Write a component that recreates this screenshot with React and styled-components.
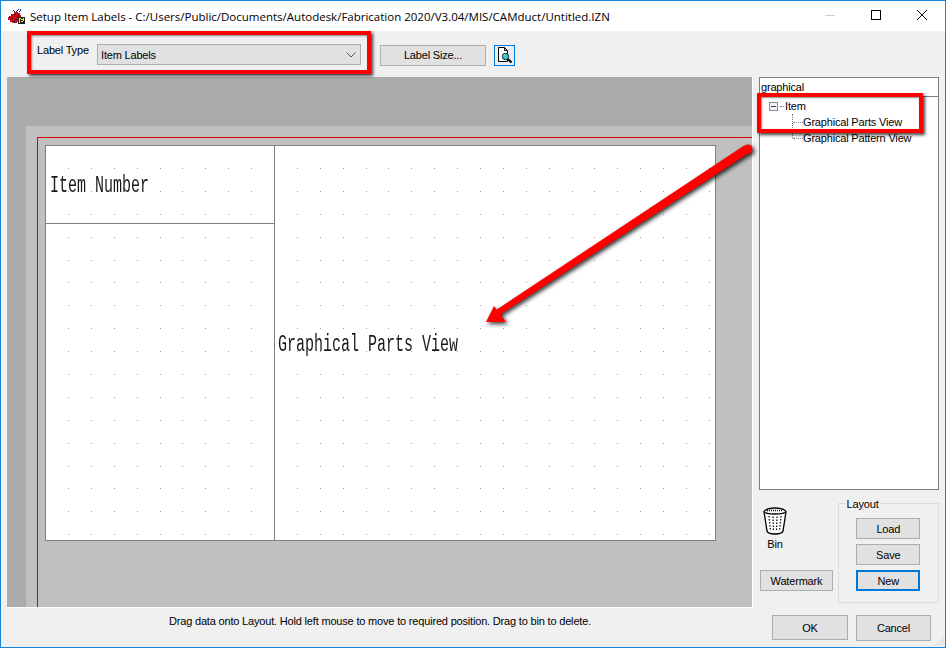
import React from 'react'
import styled, { createGlobalStyle } from 'styled-components'

const GlobalStyle = createGlobalStyle`
  html, body {
    margin: 0;
    padding: 0;
    background: #f0f0f0;
  }
`

const Window = styled.div`
  position: relative;
  box-sizing: border-box;
  width: 946px;
  height: 648px;
  overflow: hidden;
  border: 1px solid #1783d8;
  background: #f0f0f0;
  font-family: "Liberation Sans", Arial, sans-serif;
  font-size: 11px;
  letter-spacing: -0.18px;
  color: #000;
`

const TitleBar = styled.div`
  display: flex;
  align-items: center;
  height: 30px;
  padding-left: 7px;
  background: #fff;
`

const TitleText = styled.div`
  flex: 1;
  margin-left: 4px;
  font-family: "Open Sans", sans-serif;
  font-size: 11.5px;
  letter-spacing: 0;
  white-space: nowrap;
`

const Controls = styled.div`
  display: flex;
`

const Control = styled.div`
  display: flex;
  align-items: center;
  justify-content: center;
  width: 46px;
  height: 30px;
  padding-bottom: 2px;
  box-sizing: border-box;
`

const Toolbar = styled.div`
  display: flex;
  align-items: center;
  height: 46px;
  padding-left: 36px;
  padding-top: 1px;
  box-sizing: border-box;
`

const ToolLabel = styled.div`
  width: 60px;
  margin-bottom: 9px;
`

const Select = styled.div`
  display: flex;
  align-items: center;
  justify-content: space-between;
  box-sizing: border-box;
  width: 264px;
  height: 21px;
  padding: 0 4px 0 3px;
  border: 1px solid #adadad;
  background: #e1e1e1;
`

const Button = styled.div`
  display: flex;
  align-items: center;
  justify-content: center;
  box-sizing: border-box;
  width: ${p => p.$width}px;
  height: ${p => p.$height || 21}px;
  border: ${p => (p.$focused ? '2px solid #0078d7' : '1px solid #adadad')};
  background: #e1e1e1;
`

const SizeButton = styled(Button)`
  margin-left: 19px;
  margin-top: 1px;
`

const PreviewButton = styled.div`
  display: flex;
  align-items: center;
  justify-content: center;
  box-sizing: border-box;
  width: 21px;
  height: 21px;
  margin-left: 8px;
  margin-top: 1px;
  border: 1px solid #0078d7;
  background: #e8eef3;
`

const Body = styled.div`
  display: flex;
  padding-left: 6px;
`

const LeftColumn = styled.div`
  display: flex;
  flex-direction: column;
  width: 746px;
`

const Canvas = styled.div`
  display: flex;
  box-sizing: border-box;
  height: 531px;
  padding: 49px 0 0 19px;
  border-right: 1px solid #fff;
  border-bottom: 1px solid #fff;
  background: #ababab;
`

const Desk = styled.div`
  flex: 1;
  display: flex;
  padding: 11px 0 0 11px;
  background: #c0c0c0;
`

const Frame = styled.div`
  flex: 1;
  padding: 7px;
  border-left: 1px solid #e00000;
  border-top: 1px solid #e00000;
`

const Sheet = styled.div`
  position: relative;
  display: grid;
  grid-template-columns: 229px 1fr;
  grid-template-rows: 78px 1fr;
  box-sizing: border-box;
  width: 671px;
  height: 396px;
  border: 1px solid #808080;
  background: #fff;
`

const DotLayer = styled.svg`
  position: absolute;
  top: 0;
  left: 0;
`

const Cell = styled.div`
  position: relative;
  display: flex;
  align-items: center;
  padding-left: ${p => p.$inset}px;
  padding-top: 4px;
`

const NumberCell = styled(Cell)`
  border-bottom: 1px solid #808080;
  border-right: 1px solid #808080;
`

const BlankCell = styled(Cell)`
  border-right: 1px solid #808080;
`

const ViewCell = styled(Cell)`
  grid-column: 2;
  grid-row: 1 / 3;
`

const FieldText = styled.span`
  display: inline-block;
  font-family: "Liberation Mono", monospace;
  font-size: 23px;
  line-height: 1;
  letter-spacing: 0;
  white-space: nowrap;
  color: #1a1a1a;
  transform: scaleX(0.652);
  transform-origin: left center;
`

const Status = styled.div`
  padding-top: 7px;
  text-align: center;
`

const RightColumn = styled.div`
  display: flex;
  flex-direction: column;
  width: 180px;
  margin-left: 6px;
`

const TreePanel = styled.div`
  box-sizing: border-box;
  height: 413px;
  border: 1px solid #808080;
  background: #fff;
`

const Search = styled.div`
  box-sizing: border-box;
  height: 19px;
  padding: 2px 0 0 1px;
  border-bottom: 1px solid #808080;
  line-height: 14px;
`

const Tree = styled.div`
  padding: 1px 0 0 9px;
`

const TreeRow = styled.div`
  display: flex;
  align-items: center;
  height: 16px;
`

const Expander = styled.div`
  display: flex;
  align-items: center;
  justify-content: center;
  box-sizing: border-box;
  width: 9px;
  height: 9px;
  border: 1px solid #8a8a8a;
  background: #f2f2f2;

  &::after {
    content: '';
    width: 5px;
    height: 1px;
    background: #1a3f8f;
  }
`

const Stub = styled.div`
  width: 4px;
  margin: 0 1px 0 2px;
  border-top: 1px dotted #808080;
`

const ChildRow = styled(TreeRow)`
  padding-left: 23px;
`

const Elbow = styled.div`
  position: relative;
  width: 11px;
  height: 16px;

  &::before {
    content: '';
    position: absolute;
    left: 0;
    top: 0;
    height: ${p => (p.$last ? 8 : 16)}px;
    border-left: 1px dotted #808080;
  }

  &::after {
    content: '';
    position: absolute;
    left: 1px;
    top: 8px;
    width: 10px;
    border-top: 1px dotted #808080;
  }
`

const BottomArea = styled.div`
  display: flex;
  margin-top: 13px;
`

const BinColumn = styled.div`
  display: flex;
  flex-direction: column;
  width: 78px;
  padding-left: 1px;
`

const BinBlock = styled.div`
  display: flex;
  flex-direction: column;
  align-items: center;
  width: 30px;
  margin-top: 4px;
  height: 63px;
`

const BinLabel = styled.div`
  margin-top: 3px;
`

const LayoutGroup = styled.fieldset`
  display: flex;
  flex-direction: column;
  align-items: center;
  gap: 5px;
  box-sizing: border-box;
  width: 102px;
  height: 107px;
  margin: -7px 0 0 0;
  padding: 7px 0 0 0;
  border: 1px solid #dcdcdc;
  border-radius: 0;
`

const LayoutLegend = styled.legend`
  margin-left: 7px;
  padding: 2px 1px 0;
  line-height: 13px;
`

const Footer = styled.div`
  display: flex;
  gap: 8px;
  margin-top: 12px;
  margin-left: 13px;
`

const Highlight = styled.div`
  position: absolute;
  left: ${p => p.$x - 1}px;
  top: ${p => p.$y - 1}px;
  box-sizing: border-box;
  width: ${p => p.$w}px;
  height: ${p => p.$h}px;
  border: 4.5px solid #ff0000;
  box-shadow: 2px 2px 3px rgba(0, 0, 0, 0.75), inset 1px 1px 2px rgba(0, 0, 0, 0.45);
`

const ArrowLayer = styled.svg`
  position: absolute;
  left: -1px;
  top: -1px;
  filter: drop-shadow(2px 2px 2px rgba(0, 0, 0, 0.8));
`

const Grip = styled.svg`
  position: absolute;
  right: 0;
  bottom: 0;
`

const dotPositions = (start, count) =>
  Array.from({ length: count }, (_, i) => Math.round(start + i * 22.89))

const Dots = () => (
  <DotLayer width="669" height="394">
    {dotPositions(168, 17).map(y =>
      dotPositions(68, 29).map(x => (
        <rect key={x + '-' + y} x={x - 46} y={y - 146} width="1" height="1" fill="#9a9a9a" />
      ))
    )}
  </DotLayer>
)

const AppIcon = () => (
  <svg width="18" height="17" viewBox="0 0 18 17" style={{ display: 'block' }} shapeRendering="crispEdges">
    <path d="M1 8h2V6h3V4h4v1h2v2h1v5h-2v2H9v1H4v-1H2v-2H0V9h1z" fill="#c8101a" />
    <path d="M3 7h1v1H3zM6 6h2v1H6zM9 8h1v1H9zM4 10h1v1H4zM7 11h2v1H7zM2 11h1v1H2zM5 13h2v1H5zM10 6h1v1h-1zM1 9h1v1H1z" fill="#400008" />
    <path d="M8 3h1V2h1V1h1v1h-1v1H9v1H8zM11 3h1V1h1v2h-1v1h-1z" fill="#1030a0" />
    <path d="M5 2h1v1h1v1H6V3H5z" fill="#111" />
    <rect x="10" y="9" width="7" height="7" fill="#222" />
    <rect x="11" y="10" width="5" height="5" fill="#fff200" />
    <path d="M13 10.500h2M12.500 11v3.500M13 14.500h2M15 12.500v2M13 12.500h2" stroke="#222" fill="none" />
  </svg>
)

const PreviewIcon = () => (
  <svg width="17" height="18" viewBox="0 0 17 18" style={{ display: 'block' }}>
    <path d="M2.500 1.500h6l3 3v11h-9z" fill="#fff" stroke="#000" />
    <path d="M8.500 1.500v3h3" fill="none" stroke="#000" />
    <circle cx="9.500" cy="10.500" r="3.200" fill="#35c5cf" stroke="#222" />
    <path d="M8 9.500l1-1" stroke="#fff" />
    <path d="M12 13l3.500 3.500" stroke="#000" strokeWidth="2" />
  </svg>
)

const BinIcon = () => (
  <svg width="24" height="28" viewBox="0 0 24 28" style={{ display: 'block' }}>
    <path d="M1 4.500C3 2 7 1 12 1s9 1 11 3.500L20 24c-.5 2-4 3-8 3s-7.500-1-8-3z" fill="#fff" stroke="#000" strokeWidth="1.300" />
    <path d="M2 5.500c3 2 17 2 20 0" fill="none" stroke="#000" strokeWidth="1.300" />
    <path d="M4 3.500h16" stroke="#000" strokeWidth="1.500" strokeDasharray="1 1" />
    <path d="M6 9l1.500 15M10 9.500l.5 15M14 9.500l-.500 15M18 9l-1.500 15" stroke="#000" strokeWidth="1.200" strokeDasharray="1.500 1.500" fill="none" />
  </svg>
)

const treeItems = ['Graphical Parts View', 'Graphical Pattern View']

class App extends React.Component {
  render() {
    return (
      <Window>
        <GlobalStyle />
        <TitleBar>
          <AppIcon />
          <TitleText>Setup Item Labels - C:/Users/Public/Documents/Autodesk/Fabrication 2020/V3.04/MIS/CAMduct/Untitled.IZN</TitleText>
          <Controls>
            <Control>
              <svg width="10" height="10"><path d="M0 5.500h10" stroke="#cccccc" /></svg>
            </Control>
            <Control>
              <svg width="10" height="10"><rect x="0.500" y="0.500" width="9" height="9" fill="none" stroke="#000" /></svg>
            </Control>
            <Control>
              <svg width="10" height="10"><path d="M0 0l10 10M10 0L0 10" stroke="#000" /></svg>
            </Control>
          </Controls>
        </TitleBar>
        <Toolbar>
          <ToolLabel>Label Type</ToolLabel>
          <Select>
            Item Labels
            <svg width="10" height="6"><path d="M.5.500L5 5l4.500-4.500" fill="none" stroke="#555" /></svg>
          </Select>
          <SizeButton $width={106}>Label Size...</SizeButton>
          <PreviewButton><PreviewIcon /></PreviewButton>
        </Toolbar>
        <Body>
          <LeftColumn>
            <Canvas>
              <Desk>
                <Frame>
                  <Sheet>
                    <Dots />
                    <NumberCell $inset={4}><FieldText>Item Number</FieldText></NumberCell>
                    <ViewCell $inset={3}><FieldText>Graphical Parts View</FieldText></ViewCell>
                    <BlankCell />
                  </Sheet>
                </Frame>
              </Desk>
            </Canvas>
            <Status>Drag data onto Layout. Hold left mouse to move to required position. Drag to bin to delete.</Status>
          </LeftColumn>
          <RightColumn>
            <TreePanel>
              <Search>graphical</Search>
              <Tree>
                <TreeRow><Expander /><Stub />Item</TreeRow>
                {treeItems.map((item, index) => (
                  <ChildRow key={item}>
                    <Elbow $last={index === treeItems.length - 1} />
                    {item}
                  </ChildRow>
                ))}
              </Tree>
            </TreePanel>
            <BottomArea>
              <BinColumn>
                <BinBlock>
                  <BinIcon />
                  <BinLabel>Bin</BinLabel>
                </BinBlock>
                <Button $width={73}>Watermark</Button>
              </BinColumn>
              <LayoutGroup>
                <LayoutLegend>Layout</LayoutLegend>
                <Button $width={64}>Load</Button>
                <Button $width={64}>Save</Button>
                <Button $width={64} $focused>New</Button>
              </LayoutGroup>
            </BottomArea>
            <Footer>
              <Button $width={76} $height={25}>OK</Button>
              <Button $width={75} $height={26}>Cancel</Button>
            </Footer>
          </RightColumn>
        </Body>
        <Highlight $x={27} $y={31} $w={344} $h={43} />
        <Highlight $x={757} $y={93} $w={166} $h={40} />
        <ArrowLayer width="946" height="648" viewBox="0 0 946 648">
          <path d="M749.500 152.800L744.500 145.200L495.300 310.500L498.700 315.500Z" fill="#ff0000" />
          <circle cx="748" cy="149" r="4.500" fill="#ff0000" />
          <path d="M486 322L494 306L506 322Z" fill="#ff0000" />
        </ArrowLayer>
        <Grip width="11" height="11" viewBox="0 0 11 11">
          <path d="M10 1L1 10M10 4L4 10M10 7L7 10" stroke="#b8b8b8" strokeDasharray="1 1" />
        </Grip>
      </Window>
    )
  }
}

export default App
